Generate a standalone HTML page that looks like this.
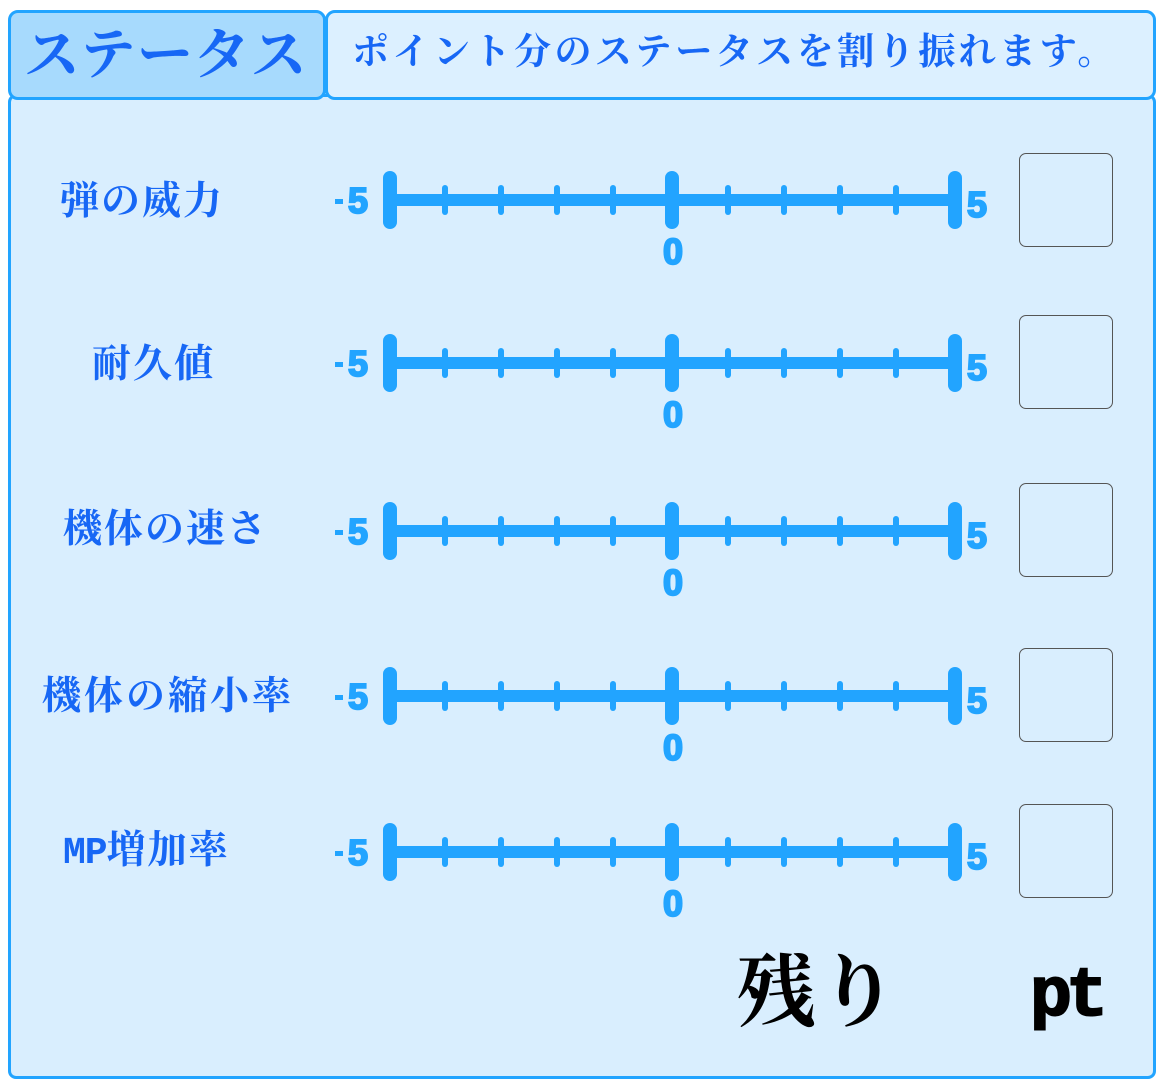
<!DOCTYPE html>
<html><head><meta charset="utf-8"><style>
html,body{margin:0;padding:0;width:1161px;height:1083px;background:#fff;overflow:hidden}
.abs{position:absolute}
.lbl{position:absolute;font-family:"Liberation Serif","Noto Serif CJK JP","Noto Serif CJK SC",serif;font-weight:bold;color:#1767f5;font-size:39px;line-height:42px;white-space:nowrap;letter-spacing:2px}
.box{position:absolute;left:1019px;width:92px;height:92px;border:1.5px solid #555;border-radius:7px}
</style></head><body>
<div class="abs" style="left:8px;top:94px;width:1142px;height:979px;background:#d9eefe;border:3px solid #22a4ff;border-radius:8px"></div>
<div class="abs" style="left:8px;top:10px;width:312px;height:84px;background:#a7dafd;border:3px solid #22a4ff;border-radius:10px"></div>
<div class="abs" style="left:325px;top:10px;width:825px;height:84px;background:#dcf0ff;border:3px solid #22a4ff;border-radius:10px"></div>
<div class="lbl" style="left:24px;top:22px;font-size:56px;line-height:68px;letter-spacing:1px">ステータス</div>
<div class="lbl" style="left:352px;top:32px;font-size:37px;letter-spacing:3.5px">ポイント分のステータスを割り振れます。</div>

<div class="lbl" style="left:60px;top:181px">弾の威力</div>
<div class="lbl" style="left:92px;top:344px">耐久値</div>
<div class="lbl" style="left:63px;top:509px">機体の速さ</div>
<div class="lbl" style="left:42px;top:676px;letter-spacing:3px">機体の縮小率</div>
<div class="lbl" style="left:63px;top:830px"><span style="font-family:'Liberation Mono',monospace;font-size:38px;letter-spacing:-1px">MP</span>増加率</div>

<svg class="abs" style="left:0;top:0" width="1161" height="1083">
<defs>
<g id="s">
<line x1="390" y1="0" x2="955" y2="0" stroke="#22a4ff" stroke-width="12" stroke-linecap="round"/>
<g stroke="#22a4ff" stroke-width="6" stroke-linecap="round">
<line x1="445" y1="-12" x2="445" y2="12"/><line x1="501" y1="-12" x2="501" y2="12"/>
<line x1="557" y1="-12" x2="557" y2="12"/><line x1="613" y1="-12" x2="613" y2="12"/>
<line x1="728" y1="-12" x2="728" y2="12"/><line x1="784" y1="-12" x2="784" y2="12"/>
<line x1="840" y1="-12" x2="840" y2="12"/><line x1="896" y1="-12" x2="896" y2="12"/>
</g>
<g stroke="#22a4ff" stroke-width="14" stroke-linecap="round">
<line x1="390" y1="-22" x2="390" y2="22"/><line x1="672" y1="-22" x2="672" y2="22"/><line x1="955" y1="-22" x2="955" y2="22"/>
</g>
<g font-family="Liberation Sans,sans-serif" font-weight="bold" font-size="36" fill="#22a4ff" stroke="#22a4ff" stroke-width="2">
<rect x="335" y="-1" width="8" height="5" stroke="none"/>
<text x="348" y="13">5</text><text x="967" y="17">5</text><text x="673" y="64" text-anchor="middle">0</text>
</g>
</g>
</defs>
<use href="#s" y="200"/><use href="#s" y="363"/><use href="#s" y="531"/><use href="#s" y="696"/><use href="#s" y="852"/>
</svg>

<div class="box" style="top:153px"></div>
<div class="box" style="top:315px"></div>
<div class="box" style="top:483px"></div>
<div class="box" style="top:648px"></div>
<div class="box" style="top:804px"></div>

<div class="lbl" style="left:736px;top:946px;color:#000;font-size:80px;line-height:96px;letter-spacing:2px">残り</div>
<div class="abs" style="left:1030px;top:960px;font-family:'Liberation Mono',monospace;font-weight:bold;font-size:70px;line-height:76px;color:#000;letter-spacing:-6px;-webkit-text-stroke:2px #000">pt</div>
</body></html>
